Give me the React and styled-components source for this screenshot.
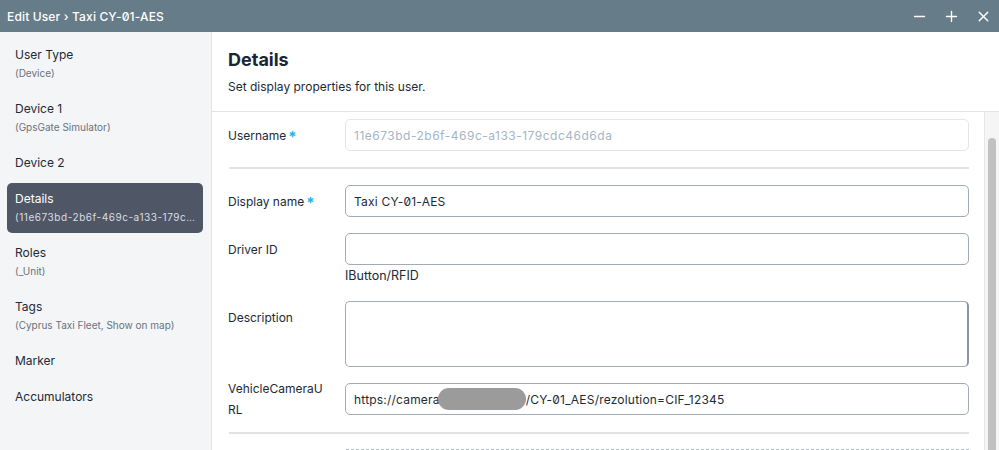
import React from "react";
import styled, { createGlobalStyle } from "styled-components";
import { Minus, Plus, X } from "lucide-react";

const Global = createGlobalStyle`
  html, body { margin: 0; padding: 0; background: #fff; }
  body { font-family: Inter, "Noto Sans", sans-serif; font-feature-settings: "zero" 1; color: #1c2a36; }
  * { box-sizing: border-box; }
`;

const Window = styled.div`
  width: 999px;
  height: 450px;
  display: flex;
  flex-direction: column;
  overflow: hidden;
`;

const TitleBar = styled.div`
  height: 32px;
  flex: none;
  background: #667c88;
  color: #fff;
  display: flex;
  align-items: center;
  padding-left: 7px;
`;

const Title = styled.div`
  flex: 1;
  font-size: 12px;
  font-weight: 500;
  letter-spacing: 0.15px;
`;

const WinButton = styled.button`
  width: 32px;
  height: 32px;
  border: 0;
  background: transparent;
  color: #fff;
  display: flex;
  align-items: center;
  justify-content: center;
  padding: 0;
`;

const Body = styled.div`
  flex: 1;
  display: flex;
  min-height: 0;
`;

const Sidebar = styled.nav`
  width: 212px;
  flex: none;
  background: #f4f5f7;
  border-right: 1px solid #e1e3e8;
  padding: 7px 8px 7px 7px;
  display: flex;
  flex-direction: column;
  gap: 4px;
`;

const NavItem = styled.div`
  flex: none;
  padding: 7px 8px;
  border-radius: 5px;
  background: ${(p) => (p.$active ? "#4f5767" : "transparent")};
  color: ${(p) => (p.$active ? "#fff" : "#1c2a36")};
`;

const NavTitle = styled.div`
  font-size: 12px;
  line-height: 18px;
`;

const NavSub = styled.div`
  font-size: 10px;
  line-height: 18px;
  letter-spacing: ${(p) => (p.$active ? "0.55px" : "0")};
  color: ${(p) => (p.$active ? "#d9dde3" : "#6a727d")};
  white-space: nowrap;
  overflow: hidden;
  text-overflow: ellipsis;
`;

const Main = styled.div`
  flex: 1;
  display: flex;
  flex-direction: column;
  min-width: 0;
`;

const Header = styled.div`
  flex: none;
  padding: 16px 16px 15px;
  border-bottom: 1px solid #e1e3e8;
  display: flex;
  flex-direction: column;
  gap: 6px;
`;

const Heading = styled.h2`
  margin: 0;
  font-size: 18px;
  line-height: 24px;
  font-weight: 700;
  color: #192734;
`;

const SubHeading = styled.div`
  font-size: 12px;
  line-height: 18px;
  color: #1c2a36;
`;

const ScrollArea = styled.div`
  flex: 1;
  display: flex;
  min-height: 0;
  overflow: hidden;
`;

const Form = styled.div`
  flex: 1;
  padding: 7px 15px 0 16px;
  display: flex;
  flex-direction: column;
`;

const Track = styled.div`
  width: 15px;
  flex: none;
  background: #f5f5f5;
  border-left: 1px solid #e6e6e6;
  padding: 26px 3px 0 3px;
`;

const Thumb = styled.div`
  height: 400px;
  background: #c1c1c1;
  border-radius: 4px;
`;

const Row = styled.div`
  flex: none;
  display: flex;
  align-items: flex-start;
  margin-bottom: ${(p) => p.$mb ?? 16}px;
`;

const Label = styled.label`
  width: 102px;
  flex: none;
  margin-right: 15px;
  min-height: 32px;
  margin-top: ${(p) => (p.$wrap ? -5 : 0)}px;
  margin-bottom: ${(p) => (p.$wrap ? -5 : 0)}px;
  display: flex;
  align-items: center;
  font-size: 12px;
  line-height: 21px;
  color: #1c2a36;
  word-break: break-all;
`;

const Req = styled.span`
  color: #1eb4e6;
  font-weight: 700;
  font-size: 15px;
  margin-left: 2px;
  line-height: 1;
  position: relative;
  top: 1px;
`;

const Control = styled.div`
  flex: 1;
  display: flex;
  flex-direction: column;
`;

const Input = styled.div`
  height: 32px;
  border: 1px solid ${(p) => (p.$disabled ? "#e2e5ea" : "#a4abb5")};
  border-radius: 5px;
  background: #fff;
  padding: 0 8px;
  display: flex;
  align-items: center;
  font-size: 12px;
  color: ${(p) => (p.$disabled ? "#a5b6c2" : "#1c2a36")};
  letter-spacing: ${(p) => (p.$disabled ? "0.5px" : "0.2px")};
  white-space: nowrap;
  overflow: hidden;
`;

const TextArea = styled.div`
  height: 66px;
  border: 1px solid #a4abb5;
  border-right: 2px solid #8d95a0;
  border-radius: 5px;
  background: #fff;
`;

const Help = styled.div`
  font-size: 12.5px;
  line-height: 16px;
  margin-top: 3px;
  color: #1c2a36;
`;

const Divider = styled.div`
  flex: none;
  height: 2px;
  background: #e2e2e2;
  margin: 0 0 ${(p) => p.$mb ?? 16}px 1px;
`;

const Redact = styled.span`
  display: inline-block;
  width: 88px;
  height: 22px;
  margin-left: -2px;
  border-radius: 11px;
  background: #9b9b9b;
`;

const DashedBox = styled.div`
  flex: 1;
  height: 32px;
  margin-left: 1px;
  border-top: 1px dashed #b5bbc3;
`;

const nav = [
  { t: "User Type", s: "(Device)" },
  { t: "Device 1", s: "(GpsGate Simulator)" },
  { t: "Device 2" },
  { t: "Details", s: "(11e673bd-2b6f-469c-a133-179cdc46d6da)", active: true },
  { t: "Roles", s: "(_Unit)" },
  { t: "Tags", s: "(Cyprus Taxi Fleet, Show on map)" },
  { t: "Marker" },
  { t: "Accumulators" },
];

export default function App() {
  return (
    <>
      <Global />
      <Window>
        <TitleBar>
          <Title>Edit User › Taxi CY-01-AES</Title>
          <WinButton><Minus size={17} strokeWidth={2} /></WinButton>
          <WinButton><Plus size={17} strokeWidth={2} /></WinButton>
          <WinButton><X size={17} strokeWidth={2} /></WinButton>
        </TitleBar>
        <Body>
          <Sidebar>
            {nav.map((n) => (
              <NavItem key={n.t} $active={n.active}>
                <NavTitle>{n.t}</NavTitle>
                {n.s && <NavSub $active={n.active}>{n.s}</NavSub>}
              </NavItem>
            ))}
          </Sidebar>
          <Main>
            <Header>
              <Heading>Details</Heading>
              <SubHeading>Set display properties for this user.</SubHeading>
            </Header>
            <ScrollArea>
              <Form>
                <Row>
                  <Label>Username<Req>*</Req></Label>
                  <Control>
                    <Input $disabled>11e673bd-2b6f-469c-a133-179cdc46d6da</Input>
                  </Control>
                </Row>
                <Divider />
                <Row>
                  <Label>Display name<Req>*</Req></Label>
                  <Control>
                    <Input>Taxi CY-01-AES</Input>
                  </Control>
                </Row>
                <Row $mb={17}>
                  <Label>Driver ID</Label>
                  <Control>
                    <Input />
                    <Help>IButton/RFID</Help>
                  </Control>
                </Row>
                <Row>
                  <Label>Description</Label>
                  <Control>
                    <TextArea />
                  </Control>
                </Row>
                <Row $mb={17}>
                  <Label $wrap>VehicleCameraURL</Label>
                  <Control>
                    <Input>https://camera<Redact />/CY-01_AES/rezolution=CIF_12345</Input>
                  </Control>
                </Row>
                <Divider $mb={15} />
                <Row>
                  <Label />
                  <DashedBox />
                </Row>
              </Form>
              <Track>
                <Thumb />
              </Track>
            </ScrollArea>
          </Main>
        </Body>
      </Window>
    </>
  );
}
